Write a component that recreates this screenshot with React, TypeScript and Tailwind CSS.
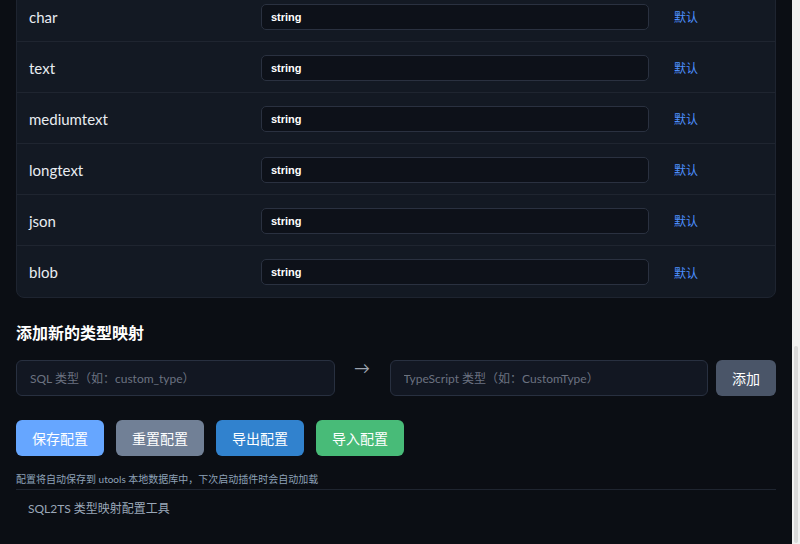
import React from 'react';

const mappings: [string, string][] = [
  ['char', 'string'],
  ['text', 'string'],
  ['mediumtext', 'string'],
  ['longtext', 'string'],
  ['json', 'string'],
  ['blob', 'string'],
];

const App: React.FC = () => {
  return (
    <div
      className="h-screen flex bg-[#0b0e14] text-[#e5e7eb]"
      style={{ fontFamily: 'Lato, "Noto Sans CJK SC", sans-serif' }}
    >
      {/* page, scrolled to its bottom */}
      <div className="flex-1 min-w-0 overflow-hidden flex flex-col-reverse">
        <div className="px-4 pb-4">
          {/* mapping table */}
          <div className="rounded-lg border border-[#1e2430] bg-[#131923] overflow-hidden">
            {mappings.map(([sql, ts], i) => (
              <div
                key={sql}
                className={`flex items-center h-[51px] px-3 pt-px ${i < mappings.length - 1 ? 'border-b border-[#1f2530]' : ''}`}
              >
                <div className="w-[232px] text-[15px] leading-5 text-[#e8ecf1]">{sql}</div>
                <input
                  readOnly
                  defaultValue={ts}
                  className="w-[388px] h-[26px] rounded-[5px] border border-[#2a3140] bg-[#0d1119] px-[9px] text-[11px] font-bold text-white outline-none"
                  style={{ fontFamily: '"Liberation Sans", sans-serif' }}
                />
                <button className="ml-[25px] pt-[3px] text-[12px] leading-4 text-[#4d90fe]">默认</button>
              </div>
            ))}
          </div>

          {/* add new mapping */}
          <h2 className="mt-[23px] mb-[15px] text-[16px] leading-6 font-bold text-white">添加新的类型映射</h2>
          <div className="flex items-start gap-2">
            <input
              placeholder="SQL 类型（如：custom_type）"
              className="flex-1 min-w-0 h-9 rounded-md border border-[#283040] bg-[#121722] px-[13px] text-[12px] text-white placeholder:text-[#6b7280] outline-none"
            />
            <span className="w-[39px] text-center text-[16px] leading-4 text-[#9ca3af]">→</span>
            <input
              placeholder="TypeScript 类型（如：CustomType）"
              className="flex-1 min-w-0 h-9 rounded-md border border-[#283040] bg-[#121722] px-[13px] text-[12px] text-white placeholder:text-[#6b7280] outline-none"
            />
            <button className="w-[60px] h-9 rounded-md bg-[#4a5568] text-[14px] text-white">添加</button>
          </div>

          {/* actions */}
          <div className="mt-6 flex gap-3">
            <button className="w-[88px] h-9 rounded-md bg-[#66a6ff] text-[14px] text-white">保存配置</button>
            <button className="w-[88px] h-9 rounded-md bg-[#718096] text-[14px] text-white">重置配置</button>
            <button className="w-[88px] h-9 rounded-md bg-[#3182ce] text-[14px] text-white">导出配置</button>
            <button className="w-[88px] h-9 rounded-md bg-[#48bb78] text-[14px] text-white">导入配置</button>
          </div>
          <p className="mt-[16px] text-[10px] leading-[14px] text-[#8ea2b8]">
            配置将自动保存到 utools 本地数据库中，下次启动插件时会自动加载
          </p>

          <footer className="mt-[3px] border-t border-[#1f2530] pt-[11px] pb-[11px] px-3">
            <p className="text-[12px] leading-4 text-[#9aa7b8]">SQL2TS 类型映射配置工具</p>
          </footer>
        </div>
      </div>

      {/* scrollbar */}
      <div className="w-2 shrink-0 bg-[#f1f1f1] flex flex-col justify-end">
        <div className="mx-auto mb-px h-[197px] w-1 rounded-full bg-[#d9d9d9]" />
      </div>
    </div>
  );
};

export default App;
